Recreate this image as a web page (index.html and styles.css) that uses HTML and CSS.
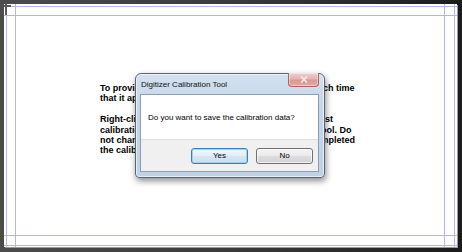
FILE: index.html
```html
<!DOCTYPE html>
<html>
<head>
<meta charset="utf-8">
<title>Digitizer Calibration Tool</title>
<link rel="stylesheet" href="styles.css">
</head>
<body>
<div class="screen">
  <span class="gl gl-v gl-v1"></span>
  <span class="gl gl-v gl-v2"></span>
  <span class="gl gl-v gl-v3"></span>
  <span class="gl gl-v gl-v4"></span>
  <span class="gl gl-h gl-h1"></span>
  <span class="gl gl-h gl-h2"></span>
  <span class="gl gl-h gl-h3"></span>
  <span class="gl gl-h gl-h4"></span>
  <svg class="cross" width="12" height="12" viewBox="0 0 12 12">
    <rect x="1" y="0" width="2" height="11" fill="#5a5a5a"/>
    <rect x="0" y="1" width="7" height="2" fill="#5a5a5a"/>
  </svg>

  <div class="instructions">
    <p>To provide accurate calibration, tap the crosshair each time<br>that it appears on the screen.</p>
    <p>Right-click anywhere on the screen to move to the last<br>calibration point. Press the Escape key to stop the tool. Do<br>not change the screen orientation until you have completed<br>the calibration process.</p>
  </div>

  <div class="dialog">
    <div class="titlebar">
      <span class="title">Digitizer Calibration Tool</span>
      <span class="close">
        <svg width="8" height="7" viewBox="0 0 8 7"><path d="M1 0.5 L7 6.5 M7 0.5 L1 6.5" stroke="#fbeeed" stroke-width="1.4" fill="none"/></svg>
      </span>
    </div>
    <div class="client">
      <div class="message">Do you want to save the calibration data?</div>
      <div class="buttons">
        <button class="btn btn-default">Yes</button>
        <button class="btn">No</button>
      </div>
    </div>
  </div>
</div>
</body>
</html>
```
FILE: styles.css
```css
html, body {
  margin: 0;
  padding: 0;
}
body {
  width: 462px;
  height: 252px;
  overflow: hidden;
  background: linear-gradient(to right, #4c4c4c 0%, #3a3a3a 50%, #262626 85%, #1b1b1b 100%);
  padding: 4px 0 0 4px;
  box-sizing: border-box;
}
.screen {
  position: relative;
  width: 453px;
  height: 243px;
  background: #ffffff;
  box-shadow: 1px 1px 0 #9a9a9a;
  box-sizing: border-box;
  padding: 79px 0 0 96px;
}
.gl {
  position: absolute;
  background: #b3b4f0;
}
.gl-v { top: 0; bottom: 0; width: 1px; }
.gl-h { left: 0; right: 0; height: 1px; }
.gl-v1 { left: 2px; }
.gl-v2 { left: 11px; }
.gl-v3 { left: 440px; }
.gl-v4 { left: 450px; }
.gl-h1 { top: 2px; }
.gl-h2 { top: 11px; }
.gl-h3 { top: 231px; }
.gl-h4 { top: 241px; }
.cross {
  position: absolute;
  left: 0;
  top: 0;
}
.instructions {
  font-family: "Liberation Sans", Arial, sans-serif;
  font-weight: bold;
  font-size: 9px;
  line-height: 10.4px;
  color: #000;
  white-space: nowrap;
}
.instructions p {
  margin: 0 0 10.4px 0;
}
.dialog {
  position: absolute;
  left: 131px;
  top: 69px;
  width: 190px;
  height: 105px;
  box-sizing: border-box;
  border: 1px solid #5a6470;
  border-radius: 6px 6px 4px 4px;
  background: linear-gradient(to bottom, #d3e1ef 0%, #c6d7e9 30%, #bfd1e4 100%);
  box-shadow: inset 0 0 0 1px rgba(255,255,255,0.6), 1px 3px 6px rgba(0,0,0,0.45);
  padding: 0 5px 5px 4px;
  display: flex;
  flex-direction: column;
  font-family: "Liberation Sans", Arial, sans-serif;
  font-size: 8px;
  color: #000;
}
.titlebar {
  height: 20px;
  display: flex;
  justify-content: space-between;
  align-items: flex-start;
}
.title {
  align-self: center;
  padding-left: 1px;
  padding-top: 1px;
  color: #111;
}
.close {
  width: 31px;
  height: 14px;
  box-sizing: border-box;
  margin-top: -1px;
  border: 1px solid #a86662;
  border-top: none;
  border-radius: 0 0 4px 4px;
  background: linear-gradient(to bottom, #f0cdca 0%, #e8b3ae 45%, #dc9892 55%, #e2aaa5 100%);
  box-shadow: inset 0 0 0 1px rgba(255,255,255,0.4);
  display: flex;
  align-items: center;
  justify-content: center;
}
.client {
  flex: 1;
  display: flex;
  flex-direction: column;
  border: 1px solid #8c9db2;
  background: #ffffff;
}
.message {
  flex: 1;
  display: flex;
  align-items: center;
  padding-left: 7px;
}
.buttons {
  height: 32px;
  box-sizing: border-box;
  background: #f0f0f0;
  border-top: 1px solid #dfdfdf;
  display: flex;
  justify-content: flex-end;
  align-items: center;
  gap: 8px;
  padding-right: 5px;
}
.btn {
  width: 57px;
  height: 16px;
  margin: 0;
  padding: 0;
  box-sizing: border-box;
  font-family: "Liberation Sans", Arial, sans-serif;
  font-size: 8px;
  color: #000;
  border: 1px solid #707070;
  border-radius: 3px;
  background: linear-gradient(to bottom, #f3f3f3 0%, #ebebeb 48%, #dddddd 52%, #d2d2d2 100%);
  box-shadow: inset 0 0 0 1px rgba(255,255,255,0.7);
}
.btn-default {
  border-color: #3c7fb1;
  background: linear-gradient(to bottom, #eef6fb 0%, #e3eff7 48%, #d4e6f3 52%, #c9dfee 100%);
  box-shadow: inset 0 0 0 1px #9fd0f2;
}
```
